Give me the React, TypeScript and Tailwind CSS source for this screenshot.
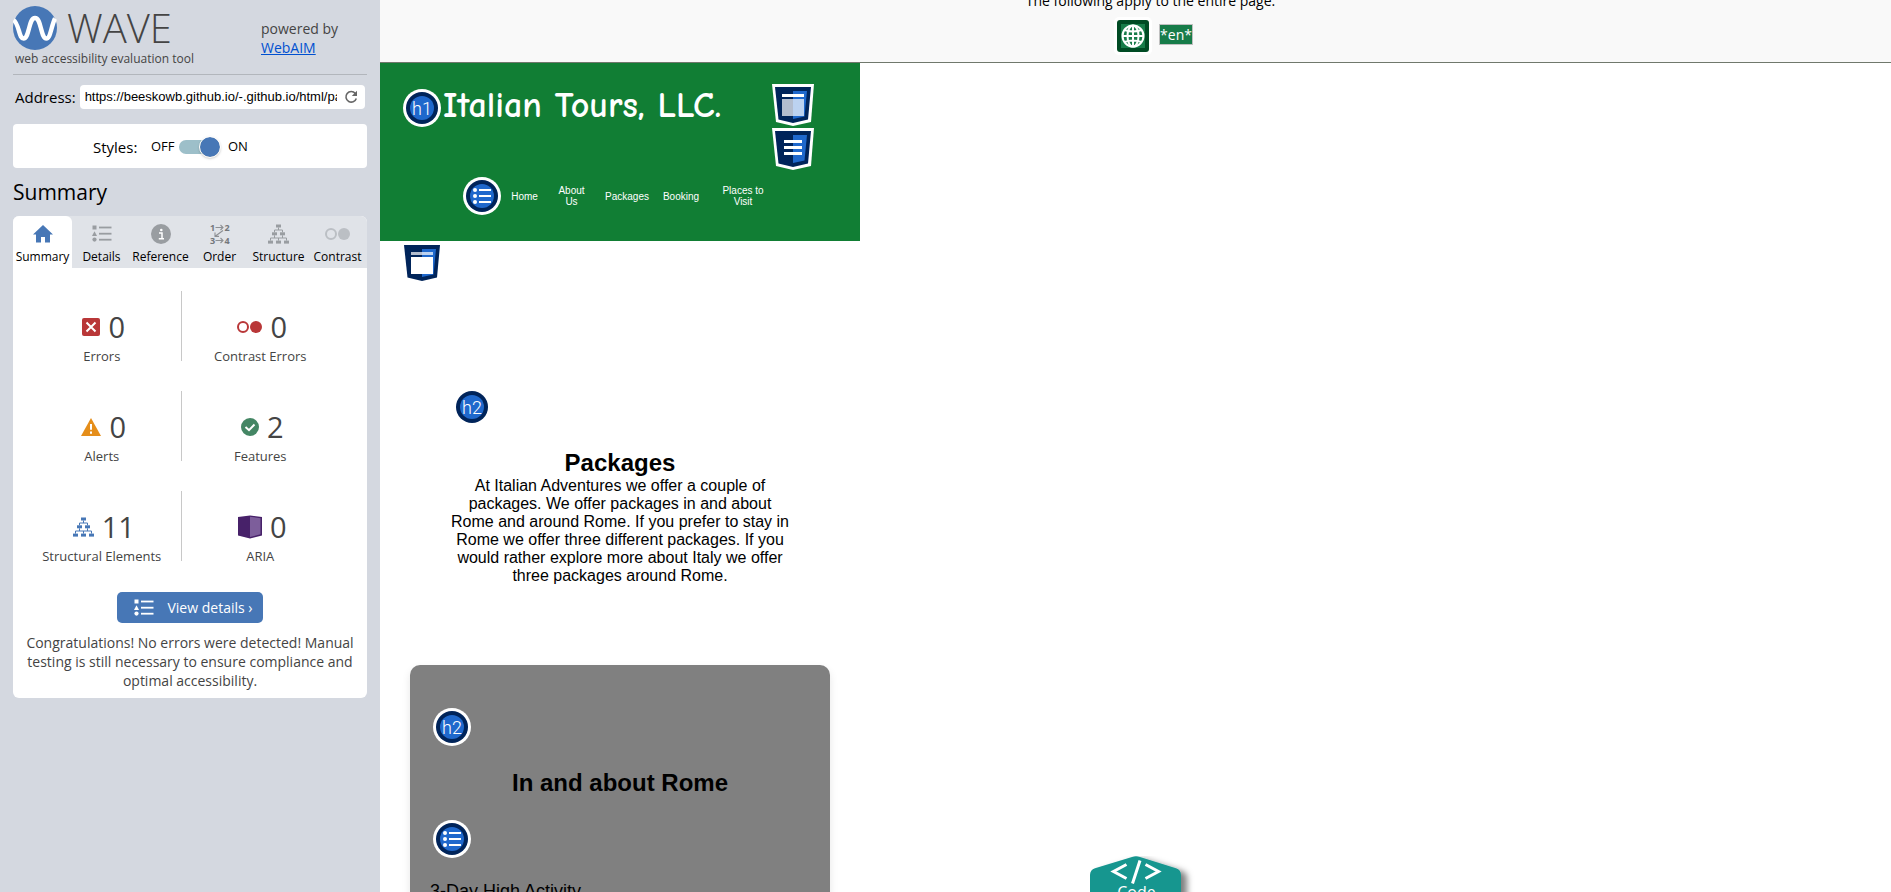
import type { ReactNode } from "react";

const NAVY = "#00245a";
const BLUE = "#1f68cc";

function WaveLogo() {
  return (
    <svg viewBox="0 0 44 44" className="size-11 shrink-0" aria-hidden="true">
      <circle cx="22" cy="22" r="22" fill="#4777b6" />
      <path
        d="M0.6 14C3 15.5 4.200 19 6 25C7.4 30 8.2 32.500 10.6 32.500C13.4 32.500 14.4 28.5 16 22.5C17.8 15.5 18.8 12 22 12C25.2 12 26.2 15.5 28 22.5C29.6 28.5 30.6 32.500 33.4 32.500C35.8 32.500 36.8 29 38.2 24C39.8 18 40.800 14.500 42 12.500"
        fill="none"
        stroke="#fff"
        strokeWidth="4.4"
      />
    </svg>
  );
}

function DetailsIcon({ className }: { className: string }) {
  return (
    <svg viewBox="0 0 20 18" className={className} fill="currentColor" aria-hidden="true">
      <rect x="0.5" y="0.5" width="4" height="4" />
      <path d="M2.5 6.2L5 11H0z" />
      <circle cx="2.5" cy="14.6" r="2.1" />
      <rect x="7" y="1.6" width="12.5" height="1.8" />
      <rect x="7" y="7.8" width="12.5" height="1.8" />
      <rect x="7" y="13.8" width="12.5" height="1.8" />
    </svg>
  );
}

function StructureIcon({ className }: { className: string }) {
  return (
    <svg viewBox="0 0 21 20" className={className} fill="currentColor" aria-hidden="true">
      <rect x="8" y="0.5" width="5" height="3" />
      <rect x="4" y="8.3" width="5" height="3" />
      <rect x="12" y="8.3" width="5" height="3" />
      <rect x="0" y="16.6" width="5" height="3" />
      <rect x="8" y="16.6" width="5" height="3" />
      <rect x="16" y="16.6" width="5" height="3" />
      <path
        d="M10.5 3.5V6M6.5 8.3V6H14.500V8.300M6.500 11.300V14M2.500 16.600V14H18.500V16.600M14.500 11.300V14M10.500 14V16.600"
        fill="none"
        stroke="currentColor"
        strokeWidth="1"
      />
    </svg>
  );
}

function HomeIcon() {
  return (
    <svg viewBox="0 0 20 18" className="h-[18px] w-5 text-[#4777b6]" fill="currentColor" aria-hidden="true">
      <path d="M10 0L20 9.500H17V17.500H12V12H8V17.500H3V9.500H0z" />
    </svg>
  );
}

function InfoIcon() {
  return (
    <svg viewBox="0 0 20 20" className="size-5" aria-hidden="true">
      <circle cx="10" cy="10" r="10" fill="#999da1" />
      <circle cx="10.300" cy="6" r="1.300" fill="#fff" />
      <path d="M8 9H11V14.500M7.800 14.800H13" fill="none" stroke="#fff" strokeWidth="1.500" />
    </svg>
  );
}

function OrderIcon() {
  return (
    <svg viewBox="0 0 20 20" className="size-5 overflow-visible" aria-hidden="true">
      <g fill="#74777b" fontFamily="Open Sans, sans-serif" fontWeight="700" fontSize="9">
        <text x="0" y="6.500">1</text>
        <text x="14.500" y="6.500">2</text>
        <text x="0" y="19.500">3</text>
        <text x="14.500" y="19.500">4</text>
      </g>
      <path
        d="M5.500 3.500H13M10.500 1L13 3.500L10.500 6M5.500 16.500H13M10.500 14L13 16.500L10.500 19M13 6.500L5.500 12M5 8.500V12.400H9"
        fill="none"
        stroke="#8d9094"
        strokeWidth="1.100"
      />
    </svg>
  );
}

function ContrastIcon({ className }: { className: string }) {
  return (
    <svg viewBox="0 0 25 12" className={className} aria-hidden="true">
      <circle cx="6" cy="6" r="5" fill="none" stroke="currentColor" strokeWidth="2" />
      <circle cx="19" cy="6" r="6" fill="currentColor" />
    </svg>
  );
}

function ErrorIcon() {
  return (
    <svg viewBox="0 0 18 18" className="size-[18px]" aria-hidden="true">
      <rect width="18" height="18" rx="2" fill="#b93738" />
      <path d="M4.500 4.500L13.500 13.500M13.500 4.500L4.500 13.500" stroke="#fff" strokeWidth="2" />
    </svg>
  );
}

function AlertIcon() {
  return (
    <svg viewBox="0 0 20 18" className="h-[18px] w-5" aria-hidden="true">
      <path d="M10 0L20 18H0z" fill="#e58e1a" />
      <path d="M10 6V11.800M10 13.500V15.800" stroke="#fff" strokeWidth="2" />
    </svg>
  );
}

function FeatureIcon() {
  return (
    <svg viewBox="0 0 18 18" className="size-[18px]" aria-hidden="true">
      <circle cx="9" cy="9" r="9" fill="#448664" />
      <path d="M4.500 9L8 12.200L13.500 6.500" fill="none" stroke="#fff" strokeWidth="2" />
    </svg>
  );
}

function AriaIcon() {
  return (
    <svg viewBox="0 0 24 24" className="size-6" aria-hidden="true">
      <path d="M0 2L12 0.500L24 2V20.500L12 23.500L0 20.500z" fill="#472169" />
      <path d="M12 1.800L22.500 3.200V19.200L12 22z" fill="#7d5e9b" />
    </svg>
  );
}

type TabItem = { label: string; icon: ReactNode };

const tabs: TabItem[] = [
  { label: "Summary", icon: <HomeIcon /> },
  { label: "Details", icon: <DetailsIcon className="h-[18px] w-5 text-[#999da1]" /> },
  { label: "Reference", icon: <InfoIcon /> },
  { label: "Order", icon: <OrderIcon /> },
  { label: "Structure", icon: <StructureIcon className="h-5 w-[21px] text-[#999da1]" /> },
  { label: "Contrast", icon: <ContrastIcon className="h-3 w-[25px] text-[#bbbfc4]" /> },
];

type Stat = { label: string; count: number; icon: ReactNode };

const stats: Stat[][] = [
  [
    { label: "Errors", count: 0, icon: <ErrorIcon /> },
    { label: "Contrast Errors", count: 0, icon: <ContrastIcon className="h-3 w-[25px] text-[#b93738]" /> },
  ],
  [
    { label: "Alerts", count: 0, icon: <AlertIcon /> },
    { label: "Features", count: 2, icon: <FeatureIcon /> },
  ],
  [
    {
      label: "Structural Elements",
      count: 11,
      icon: <StructureIcon className="h-5 w-[21px] text-[#4777b6]" />,
    },
    { label: "ARIA", count: 0, icon: <AriaIcon /> },
  ],
];

function StatCell({ label, count, icon }: Stat) {
  return (
    <li className="flex flex-1 flex-col items-center pt-5 text-[#444]">
      <div className="flex h-8 items-center gap-2 pl-1">
        {icon}
        <span className="text-[29px] leading-8">{count}</span>
      </div>
      <span className="mt-1 text-[13px] leading-[18px]">{label}</span>
    </li>
  );
}

function Sidebar() {
  return (
    <aside className="flex w-[380px] shrink-0 flex-col bg-[#d4d8e0] px-[13px] font-['Open_Sans',sans-serif]">
      <header className="flex justify-between border-b border-[#b2b6bc] pt-1.5 pb-1.5">
        <div>
          <div className="flex items-center gap-2.5">
            <WaveLogo />
            <span className="text-[40px] leading-11 font-light text-[#444]">WAVE</span>
          </div>
          <p className="pl-0.5 text-xs leading-[18px] text-[#444]">web accessibility evaluation tool</p>
        </div>
        <p className="w-[106px] pt-[13px] text-sm leading-[19px] text-[#444]">
          powered by
          <br />
          <a href="#webaim" className="text-[#0050d0] underline">
            WebAIM
          </a>
        </p>
      </header>

      <form className="flex items-center gap-1 pt-2.5 pr-0.5 pl-0.5">
        <label htmlFor="address" className="text-[15px] leading-6">
          Address:
        </label>
        <div className="flex h-6 min-w-0 flex-1 items-center gap-[7px] rounded bg-white pr-[7px] pl-[5px]">
          <input
            id="address"
            type="text"
            defaultValue="https://beeskowb.github.io/-.github.io/html/packages.html"
            className="min-w-0 flex-1 font-['Liberation_Sans',Arial,sans-serif] text-[13px] outline-none"
          />
          <button type="button" aria-label="Reload" className="shrink-0">
            <svg viewBox="0 0 14 14" className="size-3.5" aria-hidden="true">
              <path d="M12.300 8.500A5.300 5.300 0 1 1 11.300 3.400" fill="none" stroke="#666" strokeWidth="1.600" />
              <path d="M13 0.800V6H7.800z" fill="#666" />
            </svg>
          </button>
        </div>
      </form>

      <div className="mt-[15px] flex h-11 items-center rounded bg-white pt-0.5 pl-20">
        <span className="w-[58px] text-[15px]">Styles:</span>
        <label className="flex items-center text-[13px]">
          <span className="w-7">OFF</span>
          <input type="checkbox" role="switch" defaultChecked aria-label="Styles" className="peer sr-only" />
          <span className="flex h-3.5 w-[41px] items-center justify-end rounded-full bg-gradient-to-r from-[#9dbfc9] from-80% to-transparent to-80%">
            <span className="size-5 rounded-full bg-[#4777b6] shadow-[0_1px_3px_rgba(0,0,0,0.4)] outline-1 outline-white" />
          </span>
          <span className="pl-2">ON</span>
        </label>
      </div>

      <h2 className="pt-2.5 pb-2.5 text-[21px] leading-7">Summary</h2>

      <section className="rounded-md bg-white">
        <div role="tablist" className="flex rounded-t-md bg-[#e0e3e8]">
          {tabs.map((tab, i) => (
            <button
              key={tab.label}
              type="button"
              role="tab"
              aria-selected={i === 0}
              className={
                i === 0
                  ? "flex h-[52px] flex-1 basis-0 flex-col items-center rounded-t-md bg-white pt-1.5"
                  : "flex h-[52px] flex-1 basis-0 flex-col items-center pt-1.5"
              }
            >
              <span className="flex h-6 items-center justify-center">{tab.icon}</span>
              <span className="text-xs leading-[22px]">{tab.label}</span>
            </button>
          ))}
        </div>

        <div className="flex flex-col gap-[30px] pt-[23px] pr-7 pl-2.5">
          {stats.map((row) => (
            <ul key={row[0].label} className="flex h-[70px]">
              <StatCell {...row[0]} />
              <li role="separator" className="w-px bg-[#c8c8c8]" />
              <StatCell {...row[1]} />
            </ul>
          ))}
        </div>

        <div className="flex flex-col items-center px-2.5 pt-[31px] pb-2">
          <button
            type="button"
            className="flex h-[31px] items-center gap-[13px] rounded-[5px] bg-[#4777b6] pr-2.5 pl-[17px] text-sm text-white"
          >
            <DetailsIcon className="h-[18px] w-5" />
            View details ›
          </button>
          <p className="pt-2.5 text-center text-sm leading-[19px] text-[#444]">
            Congratulations! No errors were detected! Manual testing is still necessary to ensure compliance and
            optimal accessibility.
          </p>
        </div>
      </section>
    </aside>
  );
}

function RoundBadge({ children, label }: { children: ReactNode; label: string }) {
  return (
    <svg viewBox="0 0 38 38" className="block size-[38px] shrink-0" role="img" aria-label={label}>
      <circle cx="19" cy="19" r="19" fill="#fff" />
      <circle cx="19" cy="19" r="16" fill={NAVY} />
      <circle cx="19" cy="19" r="12" fill={BLUE} />
      {children}
    </svg>
  );
}

function HeadingBadge({ level }: { level: number }) {
  return (
    <RoundBadge label={`Heading level ${level}`}>
      <text x="19" y="26" textAnchor="middle" fill="#fff" fontFamily="Roboto, sans-serif" fontWeight="300" fontSize="18">
        {`h${level}`}
      </text>
    </RoundBadge>
  );
}

function ListBadge() {
  return (
    <RoundBadge label="Unordered list">
      <g fill="#fff">
        <circle cx="12" cy="13" r="2" />
        <circle cx="12" cy="19" r="2" />
        <circle cx="12" cy="25" r="2" />
        <rect x="16" y="12" width="12" height="2" />
        <rect x="16" y="18" width="12" height="2" />
        <rect x="16" y="24" width="12" height="2" />
      </g>
    </RoundBadge>
  );
}

function ShieldBadge({ children, label }: { children: ReactNode; label: string }) {
  return (
    <svg viewBox="0 0 42 42" className="block size-[42px] shrink-0" role="img" aria-label={label}>
      <path d="M0 0H42L39 38L21 42L4 38z" fill="#fff" />
      <path d="M3 3H39L36 35.500L21 39L6.500 35.500z" fill={NAVY} />
      <path d="M21 7H35L32.500 32.500L21 35z" fill={BLUE} />
      {children}
    </svg>
  );
}

const navLinks = [
  { label: "Home", box: "w-[47px]" },
  { label: "About Us", box: "w-[47px] px-2" },
  { label: "Packages", box: "w-[64px]" },
  { label: "Booking", box: "w-[44px]" },
  { label: "Places to Visit", box: "w-[80px] px-4" },
];

function TourPage() {
  return (
    <div className="w-[480px] font-['Liberation_Sans',Arial,sans-serif] text-black">
      <header className="h-[178px] bg-[#117e34] text-white">
        <div className="flex pt-[21px] pl-[23px]">
          <div className="pt-[5px]">
            <HeadingBadge level={1} />
          </div>
          <h1 className="w-[331px] pl-0.5 font-['Comic_Sans_MS','Comic_Neue','DejaVu_Sans',sans-serif] text-[36px] leading-[44px] font-bold whitespace-nowrap">
            Italian Tours, LLC.
          </h1>
          <div className="flex flex-col gap-0.5">
            <ShieldBadge label="Header">
              <rect x="10" y="10" width="22" height="3" fill="#fff" />
              <rect x="10" y="15" width="22" height="17" fill="#fff" fillOpacity="0.7" />
            </ShieldBadge>
            <ShieldBadge label="Navigation">
              <path d="M12 13.500H30M12 19.500H30M12 25.500H30" stroke="#fff" strokeWidth="3" />
            </ShieldBadge>
          </div>
        </div>
        <nav className="flex items-center pt-[7px] pl-[83px]">
          <ListBadge />
          <ul className="flex items-center text-center text-[10px] leading-[11px]">
            {navLinks.map((link) => (
              <li key={link.label} className={link.box}>
                <a href="#tour" className="block">
                  {link.label}
                </a>
              </li>
            ))}
          </ul>
        </nav>
      </header>

      <div className="pt-px pl-[21px]">
        <ShieldBadge label="Main content">
          <rect x="10" y="10" width="22" height="3" fill="#fff" fillOpacity="0.7" />
          <rect x="10" y="15" width="22" height="17" fill="#fff" />
        </ShieldBadge>
      </div>

      <section className="px-[68px] pt-[104px] text-center">
        <div className="pl-[5px]">
          <HeadingBadge level={2} />
        </div>
        <h2 className="pt-[23px] text-2xl leading-7 font-bold">Packages</h2>
        <p className="text-base leading-[18px]">
          At Italian Adventures we offer a couple of packages. We offer packages in and about Rome and around Rome.
          If you prefer to stay in Rome we offer three different packages. If you would rather explore more about
          Italy we offer three packages around Rome.
        </p>
      </section>

      <section className="mx-[30px] mt-20 rounded-[10px] bg-[#808080] px-5 pt-[43px] pb-10 shadow-[0_4px_8px_rgba(0,0,0,0.1)]">
        <div className="pl-[3px]">
          <HeadingBadge level={2} />
        </div>
        <h2 className="pt-[23px] text-center text-2xl leading-7 font-bold">In and about Rome</h2>
        <div className="pt-[23px] pl-[3px]">
          <ListBadge />
        </div>
        <ul className="pt-[23px] text-[18px] leading-5">
          <li>3-Day High Activity</li>
        </ul>
      </section>
    </div>
  );
}

function EntirePageBar() {
  return (
    <div className="flex h-[63px] flex-col items-center justify-end border-b border-[#70786c] bg-[#f9f9f9] pb-[7px] pl-[30px] font-['Open_Sans',sans-serif]">
      <p className="text-sm leading-5">The following apply to the entire page.</p>
      <div className="flex items-center gap-[7px] pt-1.5 pl-1.5">
        <svg viewBox="0 0 38 38" className="size-[38px]" role="img" aria-label="Language">
          <rect width="38" height="38" rx="5" fill="#fff" />
          <rect x="3" y="3" width="32" height="32" rx="3" fill="#004b24" />
          <rect x="7" y="7" width="24" height="24" fill="#177c49" />
          <g fill="none" stroke="#fff" strokeWidth="2">
            <circle cx="19" cy="19" r="10.500" />
            <ellipse cx="19" cy="19" rx="5.500" ry="10.500" />
            <path d="M19 8.500V29.500M8.500 19H29.500M10.500 13Q19 16 27.500 13M10.500 25Q19 22 27.500 25" />
          </g>
        </svg>
        <span className="-mt-1 border border-[#c0c0c0] bg-[#177c49] text-sm leading-[19px] text-white">*en*</span>
      </div>
    </div>
  );
}

function CodeTab() {
  return (
    <button
      type="button"
      aria-label="Show code panel"
      className="absolute bottom-0 left-1/2 h-9 w-[110px] -translate-x-[46px] overflow-hidden"
    >
      <svg viewBox="0 0 110 60" className="h-[60px] w-[110px]" aria-hidden="true">
        <defs>
          <filter id="tab-shadow" x="-20%" y="-20%" width="150%" height="150%">
            <feDropShadow dx="6" dy="3" stdDeviation="3" floodColor="#000" floodOpacity="0.5" />
          </filter>
        </defs>
        <path
          d="M0 60V19Q0 14 5 12.200L42 1Q46 -0.400 50 1L86 12.200Q91 14 91 19V60z"
          fill="#17968f"
          filter="url(#tab-shadow)"
        />
        <path d="M36.500 8.500L23.500 15.500L36.500 22.500M55.500 8.500L68.500 15.500L55.500 22.500M50 4.500L42.500 27.500" fill="none" stroke="#fff" strokeWidth="3" />
        <text x="46.500" y="42" textAnchor="middle" fill="#fff" fontFamily="Open Sans, sans-serif" fontSize="16">
          Code
        </text>
      </svg>
    </button>
  );
}

export default function App() {
  return (
    <div className="flex h-screen overflow-hidden bg-white text-black">
      <Sidebar />
      <main className="relative min-w-0 flex-1 overflow-hidden">
        <EntirePageBar />
        <TourPage />
        <CodeTab />
      </main>
    </div>
  );
}
